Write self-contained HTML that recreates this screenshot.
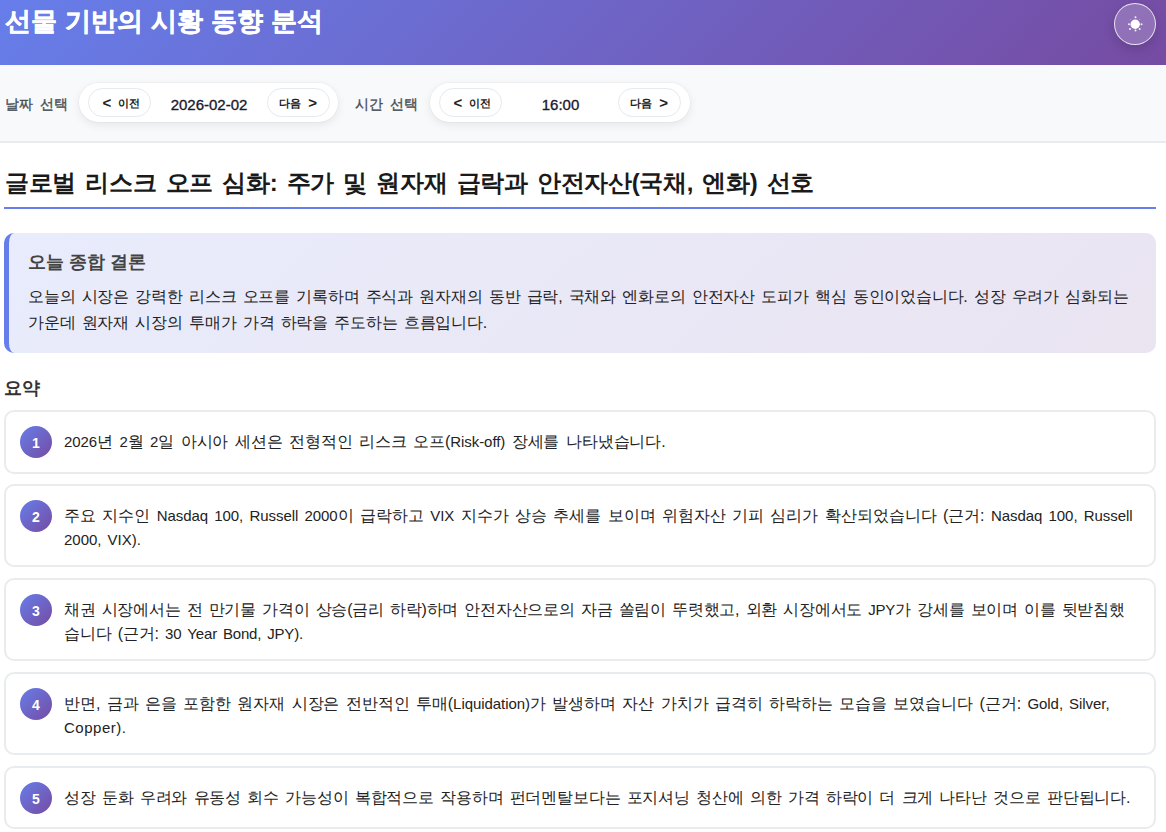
<!DOCTYPE html>
<html lang="ko"><head><meta charset="utf-8">
<style>
*{box-sizing:border-box;margin:0;padding:0}
html,body{width:1166px;height:832px;overflow:hidden;background:#fff}
body{font-family:"Liberation Sans",sans-serif;color:#333;position:relative}
.hdr{position:absolute;left:0;top:0;width:1166px;height:65px;background:linear-gradient(135deg,#667eea 0%,#764ba2 100%)}
.hdr h1{position:absolute;left:5px;top:3px;font-size:26px;font-weight:700;color:#fff;-webkit-text-stroke:0.4px #fff;white-space:nowrap;line-height:36px}
.toggle{position:absolute;left:1114px;top:3px;width:42px;height:42px;border-radius:50%;border:1.5px solid rgba(255,255,255,.8);background:rgba(255,255,255,.2);box-shadow:0 4px 12px rgba(0,0,0,.15)}
.toggle svg{position:absolute;left:0.5px;top:0.5px}
.ctrl{position:absolute;left:0;top:65px;width:1166px;height:78px;background:#f8f9fa;border-bottom:2px solid #e9ecef}
.lbl{position:absolute;top:29px;font-size:14px;font-weight:400;-webkit-text-stroke:0.35px #495057;color:#495057;white-space:nowrap;line-height:20px;letter-spacing:0.1px;word-spacing:3px}
.pill{position:absolute;top:18px;height:39px;background:#fff;border-radius:20px;box-shadow:0 3px 10px rgba(0,0,0,.08),0 0 0 1px rgba(0,0,0,.025)}
.btn{position:absolute;top:5px;height:29px;border:1px solid #e6e9ed;border-radius:15px;background:#fff;font-size:11px;font-weight:700;color:#222;line-height:29px;white-space:nowrap;text-align:center}
.btn span{display:inline-block;vertical-align:top;height:27px}
.ar{font-size:15px;font-weight:700;position:relative;top:-1px;margin:0 4px}
.val{position:absolute;top:2px;line-height:39px;font-size:15px;font-weight:400;-webkit-text-stroke:0.35px #1a1a2e;color:#1a1a2e;white-space:nowrap;text-align:center}
.main{position:absolute;left:4px;top:143px;width:1152px}
h2{position:absolute;left:0;top:23px;width:1152px;height:43px;word-spacing:3px;font-size:24px;font-weight:700;color:#1a1a1a;white-space:nowrap;border-bottom:2px solid #667eea;line-height:34px;padding-left:1px}
.sum{position:absolute;left:0;top:90px;width:1152px;height:120px;border-radius:10px;border-left:5px solid #667eea;background:linear-gradient(135deg,rgba(102,126,234,.15) 0%,rgba(118,75,162,.15) 100%)}
.sum h3{position:absolute;left:19px;top:16px;font-size:18px;font-weight:700;color:#444;white-space:nowrap;line-height:26px}
.sum p{word-spacing:2px;position:absolute;left:19px;top:51px;font-size:16px;color:#222;white-space:nowrap;line-height:25.8px}
.sh{position:absolute;left:0;top:232px;font-size:18px;font-weight:700;color:#333;line-height:26px;white-space:nowrap}
.card{position:absolute;left:0;width:1152px;border:2px solid #e9ecef;border-radius:10px;background:#fff}
.num{position:absolute;left:14px;top:14px;width:32px;height:32px;border-radius:50%;background:linear-gradient(135deg,#667eea 0%,#764ba2 100%);color:#fff;font-size:14px;font-weight:700;text-align:center;line-height:35px}
.txt{word-spacing:2px;position:absolute;left:58px;top:18px;font-size:16px;color:#222;white-space:nowrap;line-height:24px}
i{font-style:normal;font-size:15px}
</style></head><body>
<div class="hdr"><h1><span id="h1" class="ln" style="letter-spacing:0.21px">선물 기반의 시황 동향 분석</span></h1>
<div class="toggle"><svg width="38" height="38" viewBox="0 0 38 38">
<circle cx="19.2" cy="19.2" r="4.7" fill="#fff"/>
<g fill="#fff" opacity=".9">
<circle cx="19.5" cy="12.3" r="1"/><circle cx="19.5" cy="25.6" r="1"/><circle cx="13" cy="19.2" r="1"/><circle cx="25.5" cy="19.2" r="1"/>
<circle cx="14" cy="24" r="1"/><circle cx="23.7" cy="24" r="1"/><circle cx="14.5" cy="14.5" r=".5" opacity=".5"/><circle cx="23.5" cy="14.5" r=".5" opacity=".5"/>
</g></svg></div>
</div>
<div class="ctrl">
<div class="lbl" style="left:5px">날짜 선택</div>
<div class="pill" style="left:79px;width:259px">
<div class="btn" style="left:9px;width:63px"><span class="ar">&lt;</span>&nbsp;<span>이전</span></div>
<div class="val" style="left:72px;width:116px">2026-02-02</div>
<div class="btn" style="left:188px;width:63px;padding-left:3px"><span>다음</span>&nbsp;<span class="ar">&gt;</span></div>
</div>
<div class="lbl" style="left:355px">시간 선택</div>
<div class="pill" style="left:430px;width:260px">
<div class="btn" style="left:9px;width:63px"><span class="ar">&lt;</span>&nbsp;<span>이전</span></div>
<div class="val" style="left:72px;width:117px">16:00</div>
<div class="btn" style="left:188px;width:63px;padding-left:3px"><span>다음</span>&nbsp;<span class="ar">&gt;</span></div>
</div>
</div>
<div class="main">
<h2><span id="h2" class="ln" style="letter-spacing:-0.33px">글로벌 리스크 오프 심화: 주가 및 원자재 급락과 안전자산(국채, 엔화) 선호</span></h2>
<div class="sum"><h3>오늘 종합 결론</h3>
<p><span id="s1" class="ln" style="letter-spacing:-0.20px">오늘의 시장은 강력한 리스크 오프를 기록하며 주식과 원자재의 동반 급락, 국채와 엔화로의 안전자산 도피가 핵심 동인이었습니다. 성장 우려가 심화되는</span><br><span id="s2" class="ln" style="letter-spacing:-0.19px">가운데 원자재 시장의 투매가 가격 하락을 주도하는 흐름입니다.</span></p></div>
<div class="sh">요약</div>
<div class="card" style="top:267px;height:64px"><div class="num">1</div><div class="txt"><span id="c1" class="ln" style="letter-spacing:-0.07px"><i>2026</i>년 <i>2</i>월 <i>2</i>일 아시아 세션은 전형적인 리스크 오프(<i>Risk-off)</i> 장세를 나타냈습니다.</span></div></div>
<div class="card" style="top:341px;height:83px"><div class="num">2</div><div class="txt"><span id="c2a" class="ln" style="letter-spacing:-0.04px">주요 지수인 <i>Nasdaq 100, Russell 2000</i>이 급락하고 <i>VIX</i> 지수가 상승 추세를 보이며 위험자산 기피 심리가 확산되었습니다 (근거: <i>Nasdaq 100, Russell</i></span><br><span id="c2b" class="ln" style="letter-spacing:-0.02px"><i>2000, VIX).</i></span></div></div>
<div class="card" style="top:435px;height:83px"><div class="num">3</div><div class="txt"><span id="c3a" class="ln" style="letter-spacing:-0.24px">채권 시장에서는 전 만기물 가격이 상승(금리 하락)하며 안전자산으로의 자금 쏠림이 뚜렷했고, 외환 시장에서도 <i>JPY</i>가 강세를 보이며 이를 뒷받침했</span><br><span id="c3b" class="ln" style="letter-spacing:-0.18px">습니다 (근거: <i>30 Year Bond, JPY).</i></span></div></div>
<div class="card" style="top:529px;height:83px"><div class="num">4</div><div class="txt"><span id="c4a" class="ln" style="letter-spacing:-0.06px">반면, 금과 은을 포함한 원자재 시장은 전반적인 투매(<i>Liquidation)</i>가 발생하며 자산 가치가 급격히 하락하는 모습을 보였습니다 (근거: <i>Gold, Silver,</i></span><br><span id="c4b" class="ln" style="letter-spacing:0.51px"><i>Copper).</i></span></div></div>
<div class="card" style="top:623px;height:63px"><div class="num">5</div><div class="txt"><span id="c5" class="ln" style="letter-spacing:-0.18px">성장 둔화 우려와 유동성 회수 가능성이 복합적으로 작용하며 펀더멘탈보다는 포지셔닝 청산에 의한 가격 하락이 더 크게 나타난 것으로 판단됩니다.</span></div></div>
</div>
</body></html>
